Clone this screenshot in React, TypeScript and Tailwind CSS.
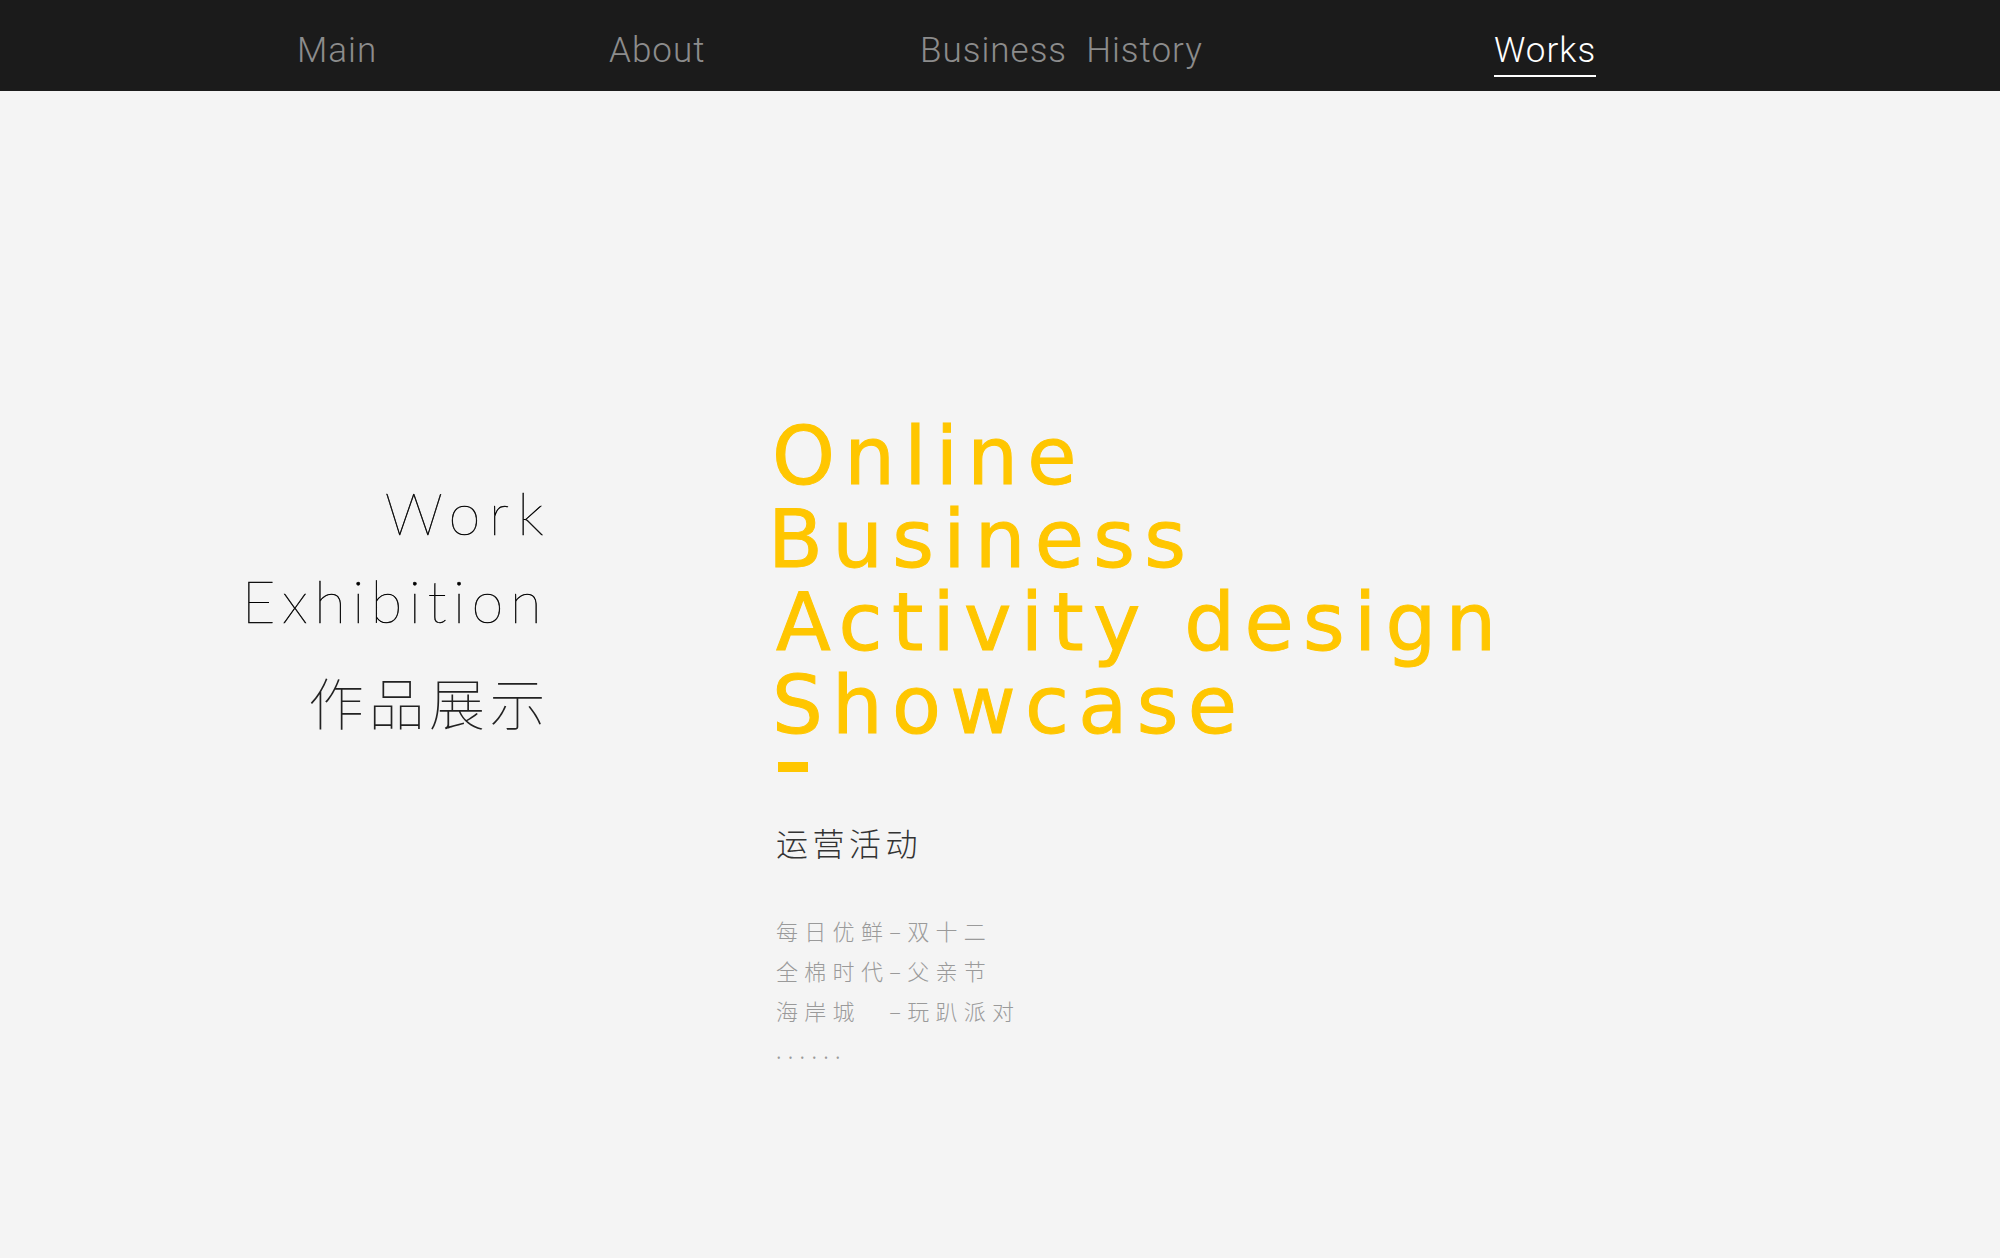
const navItems = [
  { label: 'Main', width: 'w-[312px]' },
  { label: 'About', width: 'w-[311px]' },
  { label: 'Business\u00a0\u00a0History', width: 'w-[574px]' },
];

const works = ['每日优鲜–双十二', '全棉时代–父亲节', '海岸城\u3000–玩趴派对'];

const HeaderMenu = () => (
  <nav className="h-[91px] bg-[#1b1b1b] flex items-start pl-[297px] pt-[30px] font-['Roboto','Liberation_Sans',sans-serif] font-light text-[35px] tracking-[1px]">
    {navItems.map((item) => (
      <div key={item.label} className={`${item.width} text-[#8c8c8c] leading-[41px]`}>
        {item.label}
      </div>
    ))}
    <div className="flex flex-col">
      <span className="text-white leading-[41px]">Works</span>
      <span className="mt-[4px] h-[2px] bg-white"></span>
    </div>
  </nav>
);

const App = () => {
  return (
    <div className="min-h-screen bg-[#f4f4f4]">
      <HeaderMenu />
      <main className="flex items-start">
        {/* left title */}
        <div className="w-[548px] pt-[378px] text-right text-black font-['Lato','Roboto',sans-serif] font-thin [-webkit-text-stroke:0.5px_#000]">
          <p className="-mr-[4px] text-[58px] leading-[88px] tracking-[8.5px]">Work</p>
          <p className="text-[58px] leading-[88px] tracking-[6.5px]">Exhibition</p>
          <p className="mt-[21px] -mr-[2px] text-[56px] leading-[70px] tracking-[4.5px] text-[#222] font-['Noto_Sans_CJK_SC',sans-serif] font-thin [-webkit-text-stroke:0px]">
            作品展示
          </p>
        </div>

        {/* right content */}
        <div className="ml-[224px] pt-[324px]">
          <h1 className="text-[#ffc600] font-['DejaVu_Sans',sans-serif] text-[80px] leading-[83px] tracking-[9.3px] [-webkit-text-stroke:1px_#ffc600]">
            <div>Online</div>
            <div className="-ml-[4px]">Business</div>
            <div className="ml-[4px]">Activity design</div>
            <div>Showcase</div>
          </h1>
          <div className="mt-[15px] ml-[6px] w-[30px] h-[10px] bg-[#ffc600]"></div>
          <h2 className="mt-[50px] ml-[4px] text-[32px] leading-[40px] tracking-[4.5px] text-[#333] font-['Noto_Sans_CJK_SC',sans-serif] font-light">
            运营活动
          </h2>
          <ul className="mt-[48px] ml-[4px] text-[22px] leading-[40px] tracking-[6.3px] text-[#9a9a9a] font-['Noto_Sans_CJK_SC',sans-serif] font-light">
            {works.map((w) => (
              <li key={w}>{w}</li>
            ))}
            <li className="leading-[38px]">......</li>
          </ul>
        </div>
      </main>
    </div>
  );
};

export default App;
